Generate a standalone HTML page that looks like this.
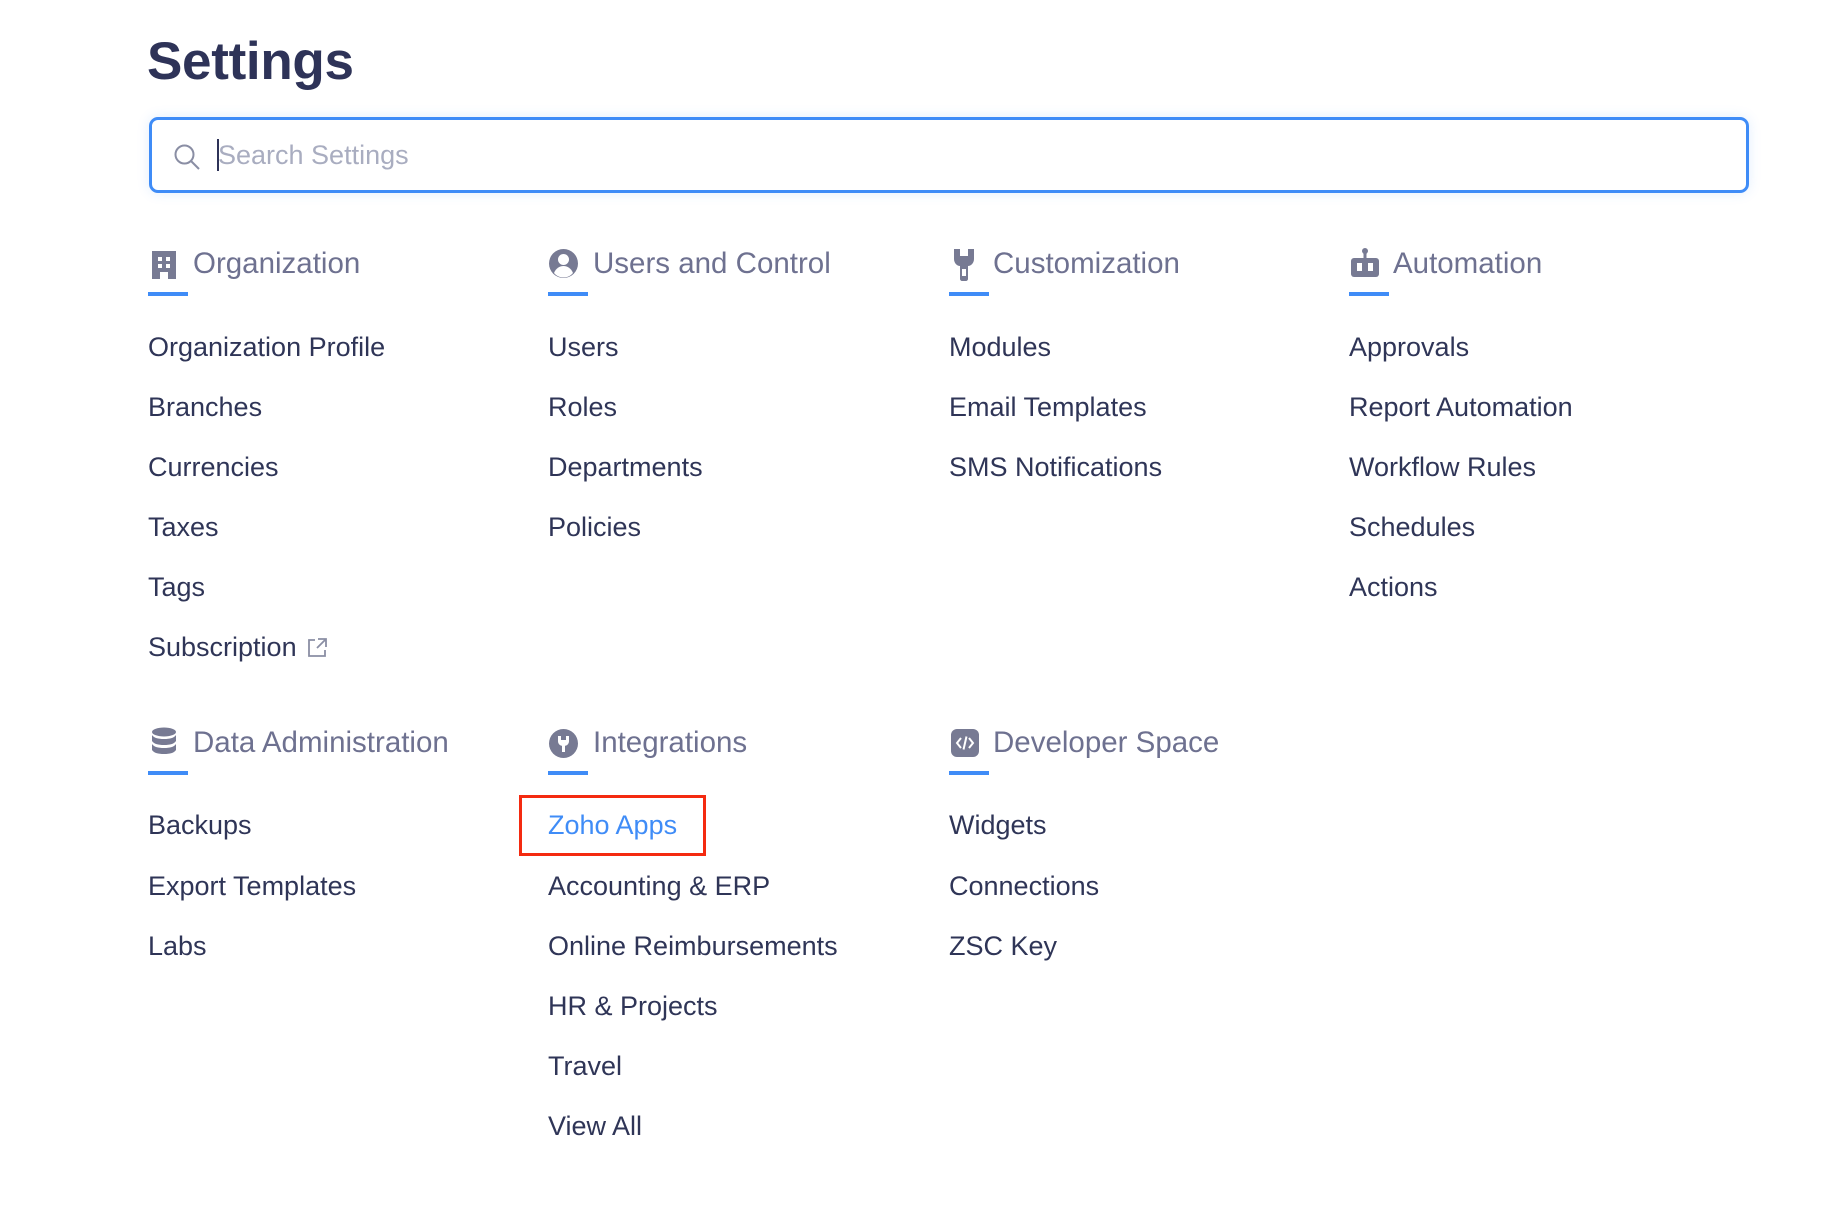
<!DOCTYPE html>
<html><head><meta charset="utf-8"><style>
body{margin:0;width:1838px;height:1232px;background:#fff;font-family:"Liberation Sans",sans-serif;position:relative;overflow:hidden}
.a{position:absolute;white-space:nowrap}
h1{position:absolute;left:147px;top:30px;margin:0;font-size:53px;font-weight:bold;color:#2e3358;line-height:64px;letter-spacing:-0.3px}
.search{position:absolute;left:149px;top:117px;width:1594px;height:70px;border:3px solid #3f8cf7;border-radius:9px;box-shadow:0 0 12px rgba(63,140,247,0.15)}
.ph{position:absolute;left:66px;top:19px;font-size:27px;color:#a9adc0;line-height:32px}
.caret{position:absolute;left:65px;top:19px;width:2px;height:32px;background:#2e3358}
.hd{font-size:29.5px;color:#6e7190;line-height:36px}
.ul{position:absolute;width:40px;height:4px;background:#3f8cf7}
.it{font-size:27px;color:#2f3557;line-height:34px}
.ico{position:absolute}
</style></head><body>
<h1>Settings</h1>
<div class="search">
<svg class="ico" style="left:20px;top:22px" width="30" height="30" viewBox="0 0 30 30"><circle cx="12.5" cy="12.5" r="9" fill="none" stroke="#8a8ea4" stroke-width="2"/><line x1="19" y1="19" x2="27" y2="27" stroke="#8a8ea4" stroke-width="2"/></svg>
<div class="caret"></div><div class="ph">Search Settings</div></div>

<svg class="ico" style="left:150px;top:249px" width="28" height="30" viewBox="0 0 28 30"><path d="M2 2h24v28h-8v-7h-8v7H2z" fill="#777a93"/><rect x="8" y="8" width="4" height="4" fill="#fff"/><rect x="16" y="8" width="4" height="4" fill="#fff"/><rect x="8" y="15" width="4" height="4" fill="#fff"/><rect x="16" y="15" width="4" height="4" fill="#fff"/></svg>
<div class="a hd" style="left:193px;top:246px">Organization</div>
<div class="ul" style="left:148px;top:292px"></div>

<svg class="ico" style="left:548px;top:248px" width="31" height="31" viewBox="0 0 31 31"><circle cx="15.5" cy="15.5" r="14.5" fill="#777a93"/><circle cx="15.5" cy="11.5" r="5.5" fill="#fff"/><path d="M6 25c2-5 6-7 9.5-7s7.5 2 9.5 7c-2.5 3-6 4.5-9.5 4.5S8.5 28 6 25z" fill="#fff"/></svg>
<div class="a hd" style="left:593px;top:246px">Users and Control</div>
<div class="ul" style="left:548px;top:292px"></div>

<svg class="ico" style="left:952px;top:247px" width="24" height="34" viewBox="0 0 24 34"><path d="M2 2h6v7h8V2h6v10c0 4-3 7-6 7v13c0 1-1 2-2 2h-4c-1 0-2-1-2-2V19c-3 0-6-3-6-7z" fill="#777a93"/><rect x="10" y="22" width="4" height="7" fill="#fff"/></svg>
<div class="a hd" style="left:993px;top:246px">Customization</div>
<div class="ul" style="left:949px;top:292px"></div>

<svg class="ico" style="left:1350px;top:247px" width="30" height="32" viewBox="0 0 30 32"><circle cx="15" cy="4" r="3" fill="#777a93"/><rect x="13.5" y="5" width="3" height="6" fill="#777a93"/><rect x="1" y="11" width="28" height="19" rx="3" fill="#777a93"/><rect x="7" y="16" width="5" height="8" fill="#fff"/><rect x="18" y="16" width="5" height="8" fill="#fff"/></svg>
<div class="a hd" style="left:1393px;top:246px">Automation</div>
<div class="ul" style="left:1349px;top:292px"></div>

<div class="a it" style="left:148px;top:330px">Organization Profile</div>
<div class="a it" style="left:148px;top:390px">Branches</div>
<div class="a it" style="left:148px;top:450px">Currencies</div>
<div class="a it" style="left:148px;top:510px">Taxes</div>
<div class="a it" style="left:148px;top:570px">Tags</div>
<div class="a it" style="left:148px;top:630px">Subscription</div>
<svg class="ico" style="left:306px;top:637px" width="22" height="22" viewBox="0 0 22 22"><path d="M9 3H3v16h16v-6" fill="none" stroke="#8a8ea4" stroke-width="1.8"/><path d="M12 2h8v8M20 2l-9 9" fill="none" stroke="#8a8ea4" stroke-width="1.8"/></svg>

<div class="a it" style="left:548px;top:330px">Users</div>
<div class="a it" style="left:548px;top:390px">Roles</div>
<div class="a it" style="left:548px;top:450px">Departments</div>
<div class="a it" style="left:548px;top:510px">Policies</div>

<div class="a it" style="left:949px;top:330px">Modules</div>
<div class="a it" style="left:949px;top:390px">Email Templates</div>
<div class="a it" style="left:949px;top:450px">SMS Notifications</div>

<div class="a it" style="left:1349px;top:330px">Approvals</div>
<div class="a it" style="left:1349px;top:390px">Report Automation</div>
<div class="a it" style="left:1349px;top:450px">Workflow Rules</div>
<div class="a it" style="left:1349px;top:510px">Schedules</div>
<div class="a it" style="left:1349px;top:570px">Actions</div>

<svg class="ico" style="left:151px;top:727px" width="26" height="32" viewBox="0 0 26 32"><ellipse cx="13" cy="5" rx="12" ry="4.5" fill="#777a93"/><path d="M1 8c2 3 6 4 12 4s10-1 12-4v6c-2 3-6 4-12 4S3 17 1 14z" fill="#777a93"/><path d="M1 17c2 3 6 4 12 4s10-1 12-4v6c-2 3-6 4-12 4S3 26 1 23z" fill="#777a93"/></svg>
<div class="a hd" style="left:193px;top:725px">Data Administration</div>
<div class="ul" style="left:148px;top:771px"></div>

<svg class="ico" style="left:548px;top:728px" width="31" height="31" viewBox="0 0 31 31"><circle cx="15.5" cy="15.5" r="14.5" fill="#777a93"/><path d="M10 8v5c0 3 2 5 5.5 5s5.5-2 5.5-5V8h-3v4h-5V8z" fill="#fff"/><rect x="14" y="17" width="3" height="7" fill="#fff"/></svg>
<div class="a hd" style="left:593px;top:725px">Integrations</div>
<div class="ul" style="left:548px;top:771px"></div>

<svg class="ico" style="left:950px;top:728px" width="30" height="30" viewBox="0 0 30 30"><rect x="1" y="1" width="28" height="28" rx="6" fill="#777a93"/><path d="M11 10l-4 5 4 5M19 10l4 5-4 5M16.5 8.5l-3 13" fill="none" stroke="#fff" stroke-width="2"/></svg>
<div class="a hd" style="left:993px;top:725px">Developer Space</div>
<div class="ul" style="left:949px;top:771px"></div>

<div class="a it" style="left:148px;top:808px">Backups</div>
<div class="a it" style="left:148px;top:869px">Export Templates</div>
<div class="a it" style="left:148px;top:929px">Labs</div>

<div class="a" style="left:519px;top:795px;width:181px;height:55px;border:3px solid #f42a10"></div>
<div class="a it" style="left:548px;top:808px;color:#3f8cf7">Zoho Apps</div>
<div class="a it" style="left:548px;top:869px">Accounting &amp; ERP</div>
<div class="a it" style="left:548px;top:929px">Online Reimbursements</div>
<div class="a it" style="left:548px;top:989px">HR &amp; Projects</div>
<div class="a it" style="left:548px;top:1049px">Travel</div>
<div class="a it" style="left:548px;top:1109px">View All</div>

<div class="a it" style="left:949px;top:808px">Widgets</div>
<div class="a it" style="left:949px;top:869px">Connections</div>
<div class="a it" style="left:949px;top:929px">ZSC Key</div>
</body></html>
